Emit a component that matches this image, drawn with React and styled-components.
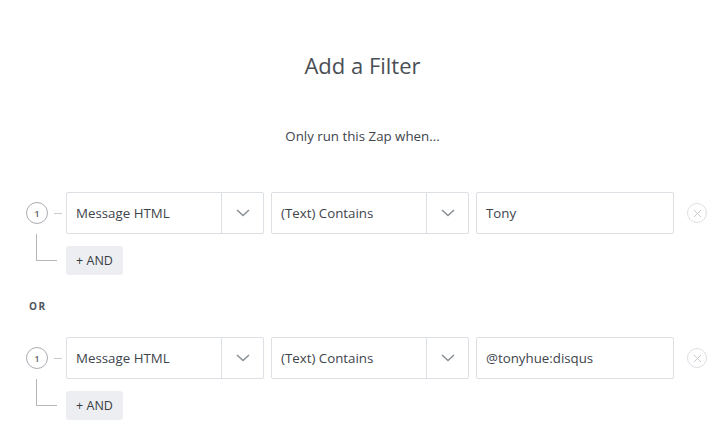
import styled, { createGlobalStyle } from "styled-components";

const GlobalStyle = createGlobalStyle`
  body {
    margin: 0;
    background: #ffffff;
    font-family: "Open Sans", "Liberation Sans", sans-serif;
    color: #40454c;
  }
`;

const Page = styled.div`
  width: 725px;
  padding-top: 47px;
`;

const Title = styled.h1`
  margin: 0;
  text-align: center;
  font-size: 22px;
  line-height: 36px;
  font-weight: 400;
  color: #4a4f56;
`;

const Subtitle = styled.p`
  margin: 43px 0 0;
  text-align: center;
  font-size: 13.3px;
  line-height: 20px;
  color: #40454c;
`;

const Group = styled.div`
  position: relative;
  margin-top: ${(p) => p.$top}px;
`;

const Row = styled.div`
  display: flex;
  align-items: center;
  height: 42px;
`;

const Step = styled.div`
  width: 22px;
  height: 22px;
  box-sizing: border-box;
  margin-left: 26px;
  border: 1.5px solid #a9adb2;
  border-radius: 50%;
  display: flex;
  align-items: center;
  justify-content: center;
  font-size: 9.5px;
  font-weight: 600;
  color: #5f646b;
  background: #fff;
`;

const Dash = styled.span`
  width: 8px;
  height: 1px;
  background: #c8cbcf;
  margin: 0 4px 0 6px;
`;

const Fields = styled.div`
  display: flex;
  gap: 7px;
`;

const Select = styled.div`
  width: 198px;
  height: 42px;
  box-sizing: border-box;
  border: 1.5px solid #dcdfe3;
  border-radius: 2px;
  display: flex;
  align-items: stretch;
  background: #fff;
`;

const Value = styled.div`
  flex: 1;
  display: flex;
  align-items: center;
  padding-left: 9px;
  font-size: 13.3px;
  color: #40454c;
`;

const Caret = styled.div`
  width: 41px;
  border-left: 1.5px solid #dcdfe3;
  display: flex;
  align-items: center;
  justify-content: center;
`;

const TextField = styled.div`
  width: 198px;
  height: 42px;
  box-sizing: border-box;
  border: 1.5px solid #dcdfe3;
  border-radius: 2px;
  display: flex;
  align-items: center;
  padding-left: 9px;
  font-size: 13.3px;
  color: #40454c;
`;

const Remove = styled.div`
  width: 20px;
  height: 20px;
  margin-left: 13px;
  box-sizing: border-box;
  border: 1px solid #dcdfe3;
  border-radius: 50%;
  display: flex;
  align-items: center;
  justify-content: center;
`;

const AndRow = styled.div`
  position: relative;
  margin-top: 12px;
  padding-left: 66px;

  &::before {
    content: "";
    position: absolute;
    left: 36px;
    top: -12px;
    width: 20px;
    height: 26px;
    border-left: 1px solid #b4b8bd;
    border-bottom: 1px solid #b4b8bd;
  }
`;

const AndButton = styled.button`
  height: 29px;
  width: 57px;
  border: none;
  border-radius: 3px;
  background: #eceef1;
  font-family: inherit;
  font-size: 12.5px;
  color: #383d44;
  padding: 0;
  cursor: pointer;
`;

const OrLabel = styled.div`
  margin-top: 24px;
  padding-left: 29px;
  font-size: 10px;
  line-height: 14px;
  font-weight: 700;
  letter-spacing: 1.5px;
  color: #50555c;
`;

const Chevron = () => (
  <svg width="14" height="8" viewBox="0 0 14 8">
    <path d="M1 1l6 5.5L13 1" fill="none" stroke="#8a8f96" strokeWidth="1.5" />
  </svg>
);

const Cross = () => (
  <svg width="9" height="9" viewBox="0 0 9 9">
    <path d="M1 1l7 7M8 1L1 8" stroke="#c8ccd0" strokeWidth="1" />
  </svg>
);

const FilterGroup = ({ top, value }) => (
  <Group $top={top}>
    <Row>
      <Step>1</Step>
      <Dash />
      <Fields>
        <Select>
          <Value>Message HTML</Value>
          <Caret>
            <Chevron />
          </Caret>
        </Select>
        <Select>
          <Value>(Text) Contains</Value>
          <Caret>
            <Chevron />
          </Caret>
        </Select>
        <TextField>{value}</TextField>
      </Fields>
      <Remove>
        <Cross />
      </Remove>
    </Row>
    <AndRow>
      <AndButton>+ AND</AndButton>
    </AndRow>
  </Group>
);

export default function App() {
  return (
    <Page>
      <GlobalStyle />
      <Title>Add a Filter</Title>
      <Subtitle>Only run this Zap when...</Subtitle>
      <FilterGroup top={46} value="Tony" />
      <OrLabel>OR</OrLabel>
      <FilterGroup top={24} value="@tonyhue:disqus" />
    </Page>
  );
}
